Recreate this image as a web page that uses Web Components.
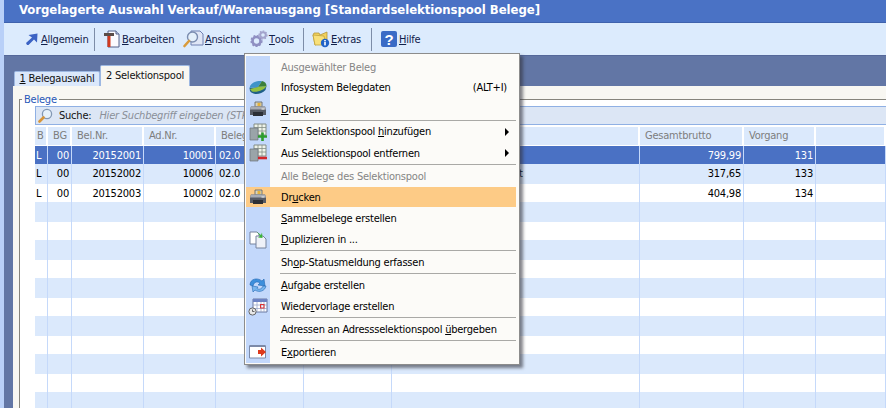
<!DOCTYPE html>
<html lang="de">
<head>
<meta charset="utf-8">
<title>Vorgelagerte Auswahl</title>
<style>
  html, body { margin: 0; height: 408px; overflow: hidden; background: #dcebfd; }
  body { font: 11px "DejaVu Sans Condensed", "Liberation Sans", sans-serif; letter-spacing: -.22px; color: #000; }
</style>
</head>
<body>

<!-- icon sprites, used by cloning into the shadow roots -->
<template id="icons">
  <svg data-i="arrow" width="14" height="14" viewBox="0 0 14 14"><path d="M2 13 L1 11 L7 5.5 L3.5 3 L12.5 1.5 L12 10.5 L9 7.5 L3.5 13Z" fill="#3c63c4"/></svg>
  <svg data-i="hammer" width="18" height="18" viewBox="0 0 18 18"><path d="M5 1h8l3 3v13H5z" fill="#fbfbff" stroke="#53608a"/><path d="M13 1v3h3" fill="#c8d4ee" stroke="#53608a"/><path d="M1 3h10v3H1z" fill="#5a4c48"/><path d="M4.5 6h3v11h-3z" fill="#d23b20"/></svg>
  <svg data-i="lens" width="21" height="18" viewBox="0 0 21 18"><path d="M8 1h9l3 3v11H8z" fill="#dfe6f6" stroke="#6f80b2"/><circle cx="9.5" cy="7" r="5" fill="#e4f0fb" stroke="#7b8db0" stroke-width="1.4"/><path d="M6 11 L1.5 16" stroke="#d99b3c" stroke-width="2.6" stroke-linecap="round"/></svg>
  <svg data-i="gears" width="18" height="18" viewBox="0 0 18 18"><circle cx="6.5" cy="11" r="4" fill="none" stroke="#8f8fc2" stroke-width="2.6"/><circle cx="6.5" cy="11" r="5.4" fill="none" stroke="#8f8fc2" stroke-width="1.4" stroke-dasharray="2 1.6"/><circle cx="13" cy="5" r="2.8" fill="none" stroke="#a3a3cc" stroke-width="2"/><circle cx="13" cy="5" r="4" fill="none" stroke="#a3a3cc" stroke-width="1.2" stroke-dasharray="1.6 1.4"/></svg>
  <svg data-i="folder" width="18" height="18" viewBox="0 0 18 18"><path d="M1 5 L2 3 H7 L8 5 L15 2 V11 L3 15Z" fill="#f2d25c" stroke="#b4953a" stroke-width=".8"/><path d="M1 5 L3 15 H14 L12 6Z" fill="#f8e07a" stroke="#c2a33e" stroke-width=".8"/><circle cx="13" cy="13" r="4.2" fill="#1f62c8"/><rect x="12.2" y="12" width="1.6" height="3.4" fill="#fff"/><rect x="12.2" y="10" width="1.6" height="1.4" fill="#fff"/></svg>
  <svg data-i="help" width="16" height="16" viewBox="0 0 16 16"><rect width="16" height="16" rx="2" fill="#3a6bc6"/><text x="8" y="13.5" text-anchor="middle" font-family="Liberation Sans" font-weight="700" font-size="15" fill="#fff">?</text></svg>
  <svg data-i="pie" width="18" height="15" viewBox="0 0 18 15"><path d="M0.500 8 L1 11 C3 15 12 15 16.500 10 L17.500 6 L9 7Z" fill="#1f5f86"/><path d="M0.500 8 C1 3 7 .5 13 1 L9 7Z" fill="#3f93c8"/><path d="M13 1 C16 1.500 17.500 3.500 17.500 6 L9 7Z" fill="#3c7f3c"/><path d="M1 9 L9 7 L17.500 6 C16 9.500 8 13 3 11.500Z" fill="#93c040"/></svg>
  <svg data-i="printer" width="18" height="16" viewBox="0 0 18 16"><path d="M6 1h7v5H6z" fill="#d8d4c0" stroke="#5e5e58" stroke-width=".8"/><path d="M8.500 2h3v3h-3z" fill="#e3b23c"/><path d="M2 5.500h14l1 3v5.500H1V8.500z" fill="#565a64"/><path d="M2 5.500h14l1 3H1z" fill="#a8acb4"/><path d="M4 11h10v4H4z" fill="#2c2f36"/><path d="M12.500 7.500h3v1h-3z" fill="#eee"/></svg>
  <svg data-i="tplus" width="18" height="18" viewBox="0 0 18 18"><path d="M5 1h12v11H5z" fill="#eef3ea" stroke="#838d86"/><path d="M5 4.500h12M5 8h12M9 1v11M13 1v11" stroke="#838d86" stroke-width=".8"/><path d="M1 5h8v12H1z" fill="#9aa4a8" stroke="#6b7478" stroke-width=".7"/><path d="M9 13.500h9M13.500 9.500v8.500" stroke="#2e9c2c" stroke-width="2.600"/></svg>
  <svg data-i="tminus" width="18" height="18" viewBox="0 0 18 18"><path d="M5 1h12v11H5z" fill="#eef3ea" stroke="#838d86"/><path d="M5 4.500h12M5 8h12M9 1v11M13 1v11" stroke="#838d86" stroke-width=".8"/><path d="M1 5h8v12H1z" fill="#9aa4a8" stroke="#6b7478" stroke-width=".7"/><path d="M9 14h9" stroke="#d2262a" stroke-width="2.600"/></svg>
  <svg data-i="pages" width="18" height="18" viewBox="0 0 18 18"><path d="M1 1h7l2 2v10H1z" fill="#fff" stroke="#76839e"/><path d="M7 5h7l3 3v9H7z" fill="#eef1f8" stroke="#76839e"/><path d="M8 1 L12 4 L13 1.500 L13.500 7 L9 6.500 L11 5Z" fill="#3bb33a"/></svg>
  <svg data-i="cycle" width="20" height="18" viewBox="0 0 20 18"><path d="M2 9 C2 3 9 1 14 5 L16 3 L17 10 L10 9 L12 7 C9 5 6 6 5 10Z" fill="#3d8fdc" stroke="#2368b4" stroke-width=".6"/><path d="M18 10 C17 15 11 17 7 14 L5 16 L4 10 L10 11 L9 12.500 C11 14 14 13 15 10Z" fill="#79b6ee" stroke="#2368b4" stroke-width=".6"/></svg>
  <svg data-i="calendar" width="20" height="18" viewBox="0 0 20 18"><path d="M5 1h14v13H5z" fill="#fff" stroke="#6a78a0"/><path d="M5 1h14v3H5z" fill="#6d83c4"/><path d="M5 7h14M5 10.500h14M9 4v10M13 4v10M16 4v10" stroke="#9aa8cc" stroke-width=".8"/><rect x="12.500" y="6.500" width="3.500" height="3.500" fill="none" stroke="#d33"/><circle cx="4.500" cy="13.500" r="3.600" fill="#e8e8e8" stroke="#666"/><path d="M4.500 11.500v2h2" stroke="#444" fill="none" stroke-width=".8"/></svg>
  <svg data-i="export" width="18" height="14" viewBox="0 0 18 14"><path d="M.5 1h16v12H.5z" fill="#fff" stroke="#7c8aa8"/><path d="M.5 1h16" stroke="#7c8aa8" stroke-width="2"/><path d="M9 5h3V2.500l5 4.500-5 4.500V9H9z" fill="#dd3a1c"/></svg>
  <svg data-i="loupe" width="15" height="15" viewBox="0 0 15 15"><circle cx="9" cy="6" r="4.600" fill="#e6f2fb" stroke="#8398b4" stroke-width="1.300"/><path d="M5.500 9.500 L1.500 13.500" stroke="#d7963a" stroke-width="2.600" stroke-linecap="round"/></svg>
</template>

<script>
const iconSource = document.getElementById('icons').content;

// returns a fresh svg of the sprite sheet
function icon(name) {
  return iconSource.querySelector(`[data-i="${name}"]`).cloneNode(true);
}

class UiIcon extends HTMLElement {
  constructor() {
    super();
    this.attachShadow({ mode: 'open' });
  }
  connectedCallback() {
    this.shadowRoot.innerHTML = `<style>:host{display:inline-flex;align-items:center;justify-content:center}svg{display:block}</style>`;
    this.shadowRoot.appendChild(icon(this.getAttribute('name')));
  }
}

class AppWindow extends HTMLElement {
  constructor() {
    super();
    this.attachShadow({ mode: 'open' });
  }
  connectedCallback() {
    this.shadowRoot.innerHTML = `
      <style>
        :host {
          display: flex;
          flex-direction: column;
          width: 886px;
          height: 408px;
          box-sizing: border-box;
          border-left: 4px solid #b9d0f8;
          background: #dcebfd;
          overflow: hidden;
        }
        .title {
          flex: none;
          height: 22px;
          line-height: 19px;
          padding-left: 15px;
          background: #4a72c5;
          border-bottom: 1px solid #3f62ad;
          color: #fff;
          font-weight: bold;
          font-size: 13px;
          letter-spacing: -.04px;
          white-space: nowrap;
        }
      </style>
      <div class="title"><slot name="title"></slot></div>
      <slot></slot>
    `;
  }
}

class ToolBar extends HTMLElement {
  constructor() {
    super();
    this.attachShadow({ mode: 'open' });
  }
  connectedCallback() {
    this.shadowRoot.innerHTML = `
      <style>
        :host {
          display: flex;
          flex: none;
          align-items: center;
          height: 32px;
          padding-left: 18px;
          box-sizing: border-box;
          background: #dcebfd;
        }
      </style>
      <slot></slot>
    `;
  }
}

class ToolButton extends HTMLElement {
  constructor() {
    super();
    this.attachShadow({ mode: 'open' });
  }
  connectedCallback() {
    const w = this.getAttribute('w');
    const iw = this.getAttribute('iw');
    this.shadowRoot.innerHTML = `
      <style>
        :host {
          display: flex;
          align-items: center;
          flex: none;
          width: ${w}px;
          white-space: nowrap;
          color: #10204a;
        }
        .i { width: ${iw}px; display: flex; justify-content: center; flex: none; }
      </style>
      <span class="i"><slot name="icon"></slot></span><slot></slot>
    `;
  }
}

class ToolSep extends HTMLElement {
  constructor() {
    super();
    this.attachShadow({ mode: 'open' });
  }
  connectedCallback() {
    this.shadowRoot.innerHTML = `
      <style>
        :host {
          display: block;
          flex: none;
          width: 1px;
          height: 23px;
          background: #7d8da8;
          margin-right: 7px;
        }
      </style>
    `;
  }
}

class TabStrip extends HTMLElement {
  constructor() {
    super();
    this.attachShadow({ mode: 'open' });
  }
  connectedCallback() {
    this.shadowRoot.innerHTML = `
      <style>
        :host {
          display: flex;
          flex: none;
          align-items: flex-end;
          height: 31px;
          padding-left: 10px;
          box-sizing: border-box;
          background: #6276a5;
          border-top: 1px solid #55689a;
        }
      </style>
      <slot></slot>
    `;
  }
}

class TabItem extends HTMLElement {
  constructor() {
    super();
    this.attachShadow({ mode: 'open' });
  }
  connectedCallback() {
    const active = this.hasAttribute('active');
    this.shadowRoot.innerHTML = `
      <style>
        :host {
          display: block;
          flex: none;
          box-sizing: border-box;
          width: ${active ? 90 : 86}px;
          height: ${active ? 21 : 15}px;
          line-height: ${active ? 19 : 13}px;
          text-align: center;
          white-space: nowrap;
          color: #111;
          background: ${active ? '#f8f7f2' : '#dbe8fb'};
          border: 1px solid #9db8e2;
          border-bottom: 0;
          border-radius: 2px 2px 0 0;
        }
      </style>
      <slot></slot>
    `;
  }
}

class GroupBox extends HTMLElement {
  constructor() {
    super();
    this.attachShadow({ mode: 'open' });
  }
  connectedCallback() {
    this.shadowRoot.innerHTML = `
      <style>
        :host {
          display: flex;
          flex-direction: column;
          flex: 1;
          min-height: 0;
          background: #f8f7f2;
          border-left: 9px solid #6276a5;
          padding: 13px 0 0 6px;
        }
        .frame {
          position: relative;
          flex: 1;
          min-height: 0;
          background: #fff;
          border: solid #86847c;
          border-width: 1px 0 0 1px;
          padding: 6px 0 0 15px;
          display: flex;
          flex-direction: column;
        }
        /* legend sits on the frame line */
        .legend {
          position: absolute;
          top: -7px;
          left: 2px;
          padding: 0 2px;
          background: linear-gradient(#f8f7f2 7px, #fff 7px);
          color: #2858b8;
          line-height: 13px;
        }
      </style>
      <div class="frame">
        <span class="legend">${this.getAttribute('legend')}</span>
        <slot></slot>
      </div>
    `;
  }
}

class SearchBar extends HTMLElement {
  constructor() {
    super();
    this.attachShadow({ mode: 'open' });
  }
  connectedCallback() {
    this.shadowRoot.innerHTML = `
      <style>
        :host {
          display: flex;
          flex: none;
          align-items: center;
          height: 19px;
          box-sizing: border-box;
          background: #dce6f5;
          border: 1px solid #8fb0e4;
          border-right: 0;
          padding-left: 2px;
          white-space: nowrap;
        }
        b { font-weight: normal; margin: 0 8px 0 6px; color: #111; }
        i { color: #8a8f98; }
      </style>
      <slot name="icon"></slot><b>Suche:</b><i>${this.getAttribute('hint')}</i>
    `;
  }
}

const COLUMNS = [
  { w: 13, label: 'B', align: 'left' },
  { w: 24, label: 'BG', align: 'right' },
  { w: 72, label: 'Bel.Nr.', align: 'right' },
  { w: 72, label: 'Ad.Nr.', align: 'right' },
  { w: 88, label: 'Beleg', align: 'left' },
  { w: 88, label: '', align: 'left' },
  { w: 248, label: '', align: 'left' },
  { w: 104, label: 'Gesamtbrutto', align: 'right' },
  { w: 72, label: 'Vorgang', align: 'right' },
  { w: 70, label: '', align: 'left' }
];

const ROWS = [
  ['L', '00', '20152001', '10001', '02.0', '', '', '799,99', '131', ''],
  ['L', '00', '20152002', '10006', '02.0', '', 't', '317,65', '133', ''],
  ['L', '00', '20152003', '10002', '02.0', '', '', '404,98', '134', '']
];

class DataGrid extends HTMLElement {
  constructor() {
    super();
    this.attachShadow({ mode: 'open' });
  }
  connectedCallback() {
    const tpl = COLUMNS.map(c => c.w + 'px').join(' ');
    const head = COLUMNS.map(c => `<div class="h">${c.label}</div>`).join('');
    let body = '';
    for (let r = 0; r < 14; r++) {
      const data = ROWS[r] || COLUMNS.map(() => '');
      const cls = r === 0 ? 'sel' : (r % 2 ? 'alt' : '');
      body += `<div class="row ${cls}">` + COLUMNS.map((c, i) => {
        const pad = data[i] === 't' ? ' style="padding-left:127px"' : '';
        return `<div class="c ${c.align}"${pad}>${data[i]}</div>`;
      }).join('') + '</div>';
    }
    this.shadowRoot.innerHTML = `
      <style>
        :host {
          display: block;
          flex: none;
          margin-top: 2px;
        }
        .head, .row { display: grid; grid-template-columns: ${tpl}; }
        .head { height: 18px; margin-bottom: 1px; }
        .h {
          background: #dbe9fc;
          border-right: 2px solid #fff;
          color: #7d7d7d;
          line-height: 18px;
          padding-left: 5px;
          overflow: hidden;
          white-space: nowrap;
        }
        .h:first-child { padding-left: 2px; }
        .row { height: 18px; line-height: 19px; background: #fff; }
        .row.alt { height: 20px; line-height: 19px; background: #dbe9fc; }
        .row.sel { background: #4a71c4; color: #fff; }
        .c {
          border-right: 1px solid #c5d9fa;
          padding: 0 2px 0 3px;
          overflow: hidden;
          white-space: nowrap;
        }
        .left { text-align: left; padding-left: 1px; }
        .c.left:nth-child(5) { padding-left: 3px; }
        .right { text-align: right; }
      </style>
      <div class="head">${head}</div>
      ${body}
    `;
  }
}

class PopupMenu extends HTMLElement {
  constructor() {
    super();
    this.attachShadow({ mode: 'open' });
  }
  connectedCallback() {
    this.shadowRoot.innerHTML = `
      <style>
        :host {
          position: absolute;
          left: 244px;
          top: 53px;
          width: 276px;
          box-sizing: border-box;
          display: block;
          border: 1px solid #8c8c8c;
          padding: 2px 3px 1px 1px;
          background: #fcfbf8;
          box-shadow: 3px 3px 3px rgba(50, 50, 60, .6);
        }
        .gutter {
          background: linear-gradient(#c3d8fb, #c3d8fb) no-repeat 0 0 / 24px 100%;
          display: flex;
          flex-direction: column;
        }
      </style>
      <div class="gutter"><slot></slot></div>
    `;
  }
}

class MenuItem extends HTMLElement {
  constructor() {
    super();
    this.attachShadow({ mode: 'open' });
  }
  connectedCallback() {
    const h = this.getAttribute('h') || 22;
    this.shadowRoot.innerHTML = `
      <style>
        :host {
          display: flex;
          align-items: center;
          flex: none;
          height: ${h}px;
          color: #000;
          white-space: nowrap;
        }
        :host([disabled]) { color: #858585; }
        :host([hot]) { background: #fdcb86; margin-bottom: 1px; height: ${h - 1}px; }
        .i { width: 24px; flex: none; display: flex; justify-content: center; }
        .t { margin-left: 11px; flex: 1; }
        .k { margin-right: 9px; }
        .a {
          width: 0; height: 0;
          margin-right: 7px;
          border: 4px solid transparent;
          border-left: 4px solid #000;
          border-right: 0;
        }
      </style>
      <span class="i"><slot name="icon"></slot></span>
      <span class="t"><slot></slot></span>
      ${this.hasAttribute('key') ? `<span class="k">${this.getAttribute('key')}</span>` : ''}
      ${this.hasAttribute('sub') ? '<span class="a"></span>' : ''}
    `;
  }
}

class MenuSep extends HTMLElement {
  constructor() {
    super();
    this.attachShadow({ mode: 'open' });
  }
  connectedCallback() {
    this.shadowRoot.innerHTML = `
      <style>
        :host {
          display: block;
          flex: none;
          height: 1px;
          margin-left: 34px;
          background: #a9a9a6;
        }
      </style>
    `;
  }
}

customElements.define('ui-icon', UiIcon);
customElements.define('app-window', AppWindow);
customElements.define('tool-bar', ToolBar);
customElements.define('tool-button', ToolButton);
customElements.define('tool-sep', ToolSep);
customElements.define('tab-strip', TabStrip);
customElements.define('tab-item', TabItem);
customElements.define('group-box', GroupBox);
customElements.define('search-bar', SearchBar);
customElements.define('data-grid', DataGrid);
customElements.define('popup-menu', PopupMenu);
customElements.define('menu-item', MenuItem);
customElements.define('menu-sep', MenuSep);
</script>

<app-window>
  <span slot="title">Vorgelagerte Auswahl Verkauf/Warenausgang [Standardselektionspool Belege]</span>
  <tool-bar>
    <tool-button w="72" iw="19"><ui-icon slot="icon" name="arrow"></ui-icon><u>A</u>llgemein</tool-button>
    <tool-sep></tool-sep>
    <tool-button w="80" iw="20"><ui-icon slot="icon" name="hammer"></ui-icon><u>B</u>earbeiten</tool-button>
    <tool-button w="67" iw="23"><ui-icon slot="icon" name="lens"></ui-icon><u>A</u>nsicht</tool-button>
    <tool-button w="54" iw="20"><ui-icon slot="icon" name="gears"></ui-icon><u>T</u>ools</tool-button>
    <tool-sep></tool-sep>
    <tool-button w="60" iw="20"><ui-icon slot="icon" name="folder"></ui-icon><u>E</u>xtras</tool-button>
    <tool-sep></tool-sep>
    <tool-button w="50" iw="20"><ui-icon slot="icon" name="help"></ui-icon><u>H</u>ilfe</tool-button>
  </tool-bar>
  <tab-strip>
    <tab-item><u>1</u> Belegauswahl</tab-item>
    <tab-item active>2 Selektionspool</tab-item>
  </tab-strip>
  <group-box legend="Belege">
    <search-bar hint="Hier Suchbegriff eingeben (STRG+F)"><ui-icon slot="icon" name="loupe"></ui-icon></search-bar>
    <data-grid></data-grid>
  </group-box>
</app-window>

<popup-menu>
  <menu-item h="18" style="padding-top:2px" disabled>Ausgewählter Beleg</menu-item>
  <menu-item key="(ALT+I)"><ui-icon slot="icon" name="pie"></ui-icon>Infosystem Belegdaten</menu-item>
  <menu-item><ui-icon slot="icon" name="printer"></ui-icon><u>D</u>rucken</menu-item>
  <menu-sep></menu-sep>
  <menu-item h="21" sub><ui-icon slot="icon" name="tplus"></ui-icon>Zum Selektionspool <u>h</u>inzufügen</menu-item>
  <menu-item sub><ui-icon slot="icon" name="tminus"></ui-icon>Aus Selektionspool entfernen</menu-item>
  <menu-sep></menu-sep>
  <menu-item disabled>Alle Belege des Selektionspool</menu-item>
  <menu-item h="21" hot><ui-icon slot="icon" name="printer"></ui-icon>Dr<u>u</u>cken</menu-item>
  <menu-item h="21"><u>S</u>ammelbelege erstellen</menu-item>
  <menu-item h="21"><ui-icon slot="icon" name="pages"></ui-icon><u>D</u>uplizieren in ...</menu-item>
  <menu-sep></menu-sep>
  <menu-item>Sh<u>o</u>p-Statusmeldung erfassen</menu-item>
  <menu-sep></menu-sep>
  <menu-item><ui-icon slot="icon" name="cycle"></ui-icon><u>A</u>ufgabe erstellen</menu-item>
  <menu-item h="21"><ui-icon slot="icon" name="calendar"></ui-icon>Wiede<u>r</u>vorlage erstellen</menu-item>
  <menu-sep></menu-sep>
  <menu-item>Adressen an Adressselektionspool <u>ü</u>bergeben</menu-item>
  <menu-sep></menu-sep>
  <menu-item><ui-icon slot="icon" name="export"></ui-icon>E<u>x</u>portieren</menu-item>
</popup-menu>

</body>
</html>
